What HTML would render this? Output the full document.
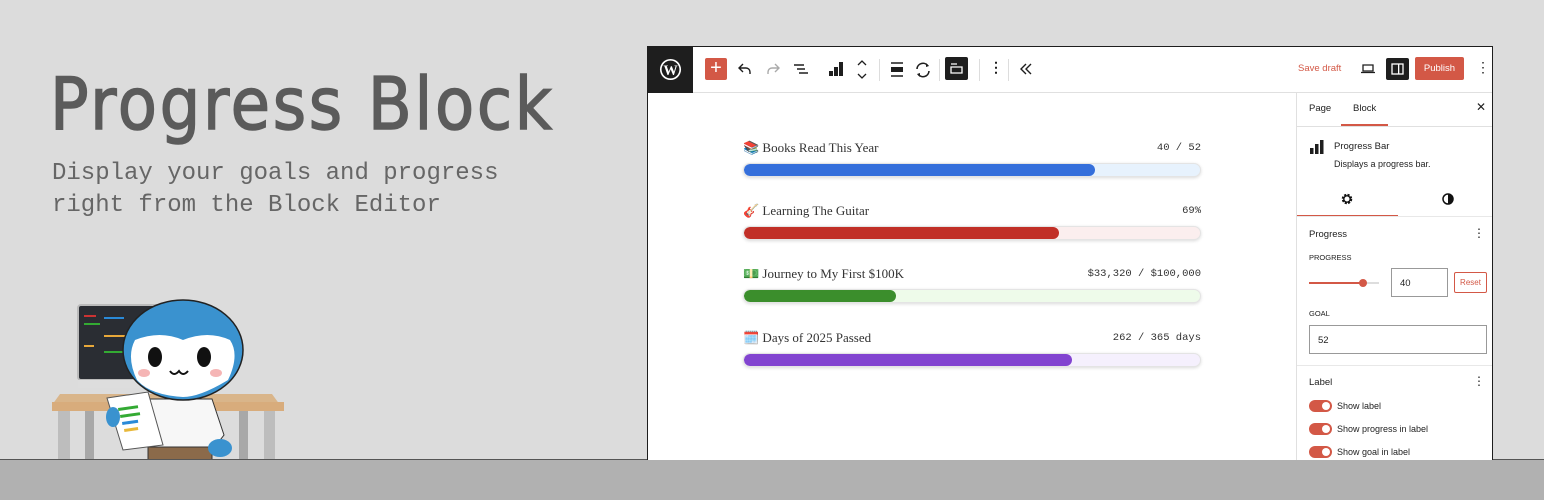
<!DOCTYPE html>
<html><head><meta charset="utf-8"><style>
*{box-sizing:border-box;margin:0;padding:0}
body{width:1544px;height:500px;background:#dcdcdc;position:relative;overflow:hidden;font-family:"Liberation Sans",sans-serif}
.ground{position:absolute;left:0;top:459px;width:1544px;height:41px;background:#b1b1b1;border-top:1px solid #555}
h1{position:absolute;left:50px;top:62px;font-size:72px;font-weight:400;color:#5b5b5b;letter-spacing:3px;font-family:"DejaVu Sans","Liberation Sans",sans-serif;transform:scaleX(0.89);transform-origin:left;-webkit-text-stroke:1.5px #5b5b5b;white-space:nowrap}
.sub{position:absolute;left:52px;top:158px;font-family:"Liberation Mono",monospace;font-size:24px;line-height:32px;color:#666}
.ed{position:absolute;left:647px;top:46px;width:846px;height:414px;background:#fff;border:1px solid #1e1e1e;border-bottom:none;overflow:hidden}
.tb{position:absolute;left:0;top:0;width:100%;height:46px;border-bottom:1px solid #e0e0e0}
.wp{position:absolute;left:0;top:0;width:45px;height:46px;background:#1e1e1e}
.ic{position:absolute}
.side{position:absolute;left:648px;top:46px;width:197px;height:370px;border-left:1px solid #e0e0e0;font-size:9px;color:#1e1e1e}
.row{position:absolute;left:95px;width:458px}
.lab{font-family:"Liberation Serif",serif;font-size:13px;color:#333;position:absolute;left:0;top:0}
.val{font-family:"Liberation Mono",monospace;font-size:10.5px;color:#333;position:absolute;right:0;top:2px}
.bar{position:absolute;left:0;top:23px;width:458px;height:14px;border-radius:7px;box-shadow:0 1px 3px rgba(0,0,0,.15);border:1px solid #e4e4e4;overflow:hidden}
.bar i{display:block;height:100%;border-radius:7px}
.tg{position:absolute;left:12px;width:23px;height:12px;border-radius:6px;background:#d35846}
.tg:after{content:"";position:absolute;right:2px;top:2px;width:8px;height:8px;border-radius:50%;background:#fff}
.tl{position:absolute;left:40px;font-size:9px}
</style></head><body>
<h1>Progress Block</h1>
<div class="sub">Display your goals and progress<br>right from the Block Editor</div>

<svg style="position:absolute;left:40px;top:295px" width="260" height="205" viewBox="0 0 260 205">
<rect x="38" y="10" width="128" height="75" rx="3" fill="#2a2d33" stroke="#bbb" stroke-width="2"/>
<rect x="44" y="20" width="12" height="2" fill="#c33"/><rect x="44" y="28" width="16" height="2" fill="#3a3"/><rect x="64" y="22" width="20" height="2" fill="#2a8ad8"/><rect x="64" y="40" width="24" height="2" fill="#e8a83a"/><rect x="64" y="56" width="22" height="2" fill="#3a3"/><rect x="44" y="50" width="10" height="2" fill="#e8a83a"/>
<rect x="38" y="85" width="128" height="8" fill="#ddd"/>
<polygon points="12,110 240,110 232,99 20,99" fill="#d9b58a"/>
<rect x="12" y="107" width="232" height="9" fill="#d8ac7c"/>
<rect x="18" y="116" width="12" height="76" fill="#bdbdbd"/><rect x="45" y="116" width="9" height="60" fill="#a8a8a8"/>
<rect x="224" y="116" width="11" height="76" fill="#bdbdbd"/><rect x="199" y="116" width="9" height="58" fill="#a8a8a8"/>
<path d="M108 104 L172 104 L184 140 L170 158 L110 158Z" fill="#f7f7f7" stroke="#333"/>
<path d="M108 152 L172 152 L172 172 L108 172Z" fill="#8b6a4a" stroke="#333"/>
<ellipse cx="122" cy="181" rx="14" ry="6" fill="#3a92cf"/><ellipse cx="160" cy="181" rx="14" ry="6" fill="#3a92cf"/>
<ellipse cx="180" cy="153" rx="12" ry="9" fill="#3a92cf"/>
<ellipse cx="143" cy="55" rx="60" ry="50" fill="#3a92cf" stroke="#222" stroke-width="1.5"/>
<path d="M95 45 Q120 35 143 45 Q168 35 190 45 Q200 60 188 85 Q160 102 143 102 Q110 100 97 85 Q86 62 95 45Z" fill="#fff"/>
<ellipse cx="115" cy="62" rx="7" ry="10" fill="#111"/><ellipse cx="164" cy="62" rx="7" ry="10" fill="#111"/>
<ellipse cx="104" cy="78" rx="6" ry="4" fill="#f5b5b5"/><ellipse cx="176" cy="78" rx="6" ry="4" fill="#f5b5b5"/>
<path d="M130 76 q4 6 9 0 q4 6 9 0" fill="none" stroke="#111" stroke-width="2"/>
<polygon points="67,103 108,97 123,150 83,155" fill="#fff" stroke="#555"/>
<rect x="78" y="113" width="20" height="3" fill="#3a3" transform="rotate(-8 78 113)"/><rect x="80" y="120" width="20" height="3" fill="#3a3" transform="rotate(-8 80 120)"/><rect x="82" y="127" width="16" height="3" fill="#2a8ad8" transform="rotate(-8 82 127)"/><rect x="84" y="134" width="14" height="3" fill="#e8b83a" transform="rotate(-8 84 134)"/>
<ellipse cx="73" cy="122" rx="7" ry="10" fill="#3a92cf"/>
</svg>

<div class="ground"></div>

<div class="ed">
 <div class="tb">
  <div class="wp"><svg class="ic" style="left:11px;top:11px" width="23" height="23" viewBox="0 0 24 24"><circle cx="12" cy="12" r="11" fill="#fff"/><circle cx="12" cy="12" r="9.3" fill="#1e1e1e"/><text x="12" y="17.5" text-anchor="middle" font-family="Liberation Serif" font-size="15" font-weight="bold" fill="#fff">W</text></svg></div>
  <div class="ic" style="left:57px;top:11px;width:22px;height:22px;background:#d35846;border-radius:2px;color:#fff;font-size:20px;line-height:21px;text-align:center">+</div>
  <svg class="ic" style="left:90px;top:16px" width="14" height="12"><path d="M5 1L1 5l4 4M1 5h7a4 4 0 0 1 4 4v2" fill="none" stroke="#1e1e1e" stroke-width="1.4"/></svg>
  <svg class="ic" style="left:118px;top:16px" width="14" height="12"><path d="M9 1l4 4-4 4M13 5H6a4 4 0 0 0-4 4v2" fill="none" stroke="#aaa" stroke-width="1.4"/></svg>
  <svg class="ic" style="left:146px;top:17px" width="14" height="11"><path d="M0 1h10M3 5h8M5 9h9" stroke="#1e1e1e" stroke-width="1.5"/></svg>
  <svg class="ic" style="left:181px;top:14px" width="15" height="15"><rect x="0" y="10" width="4" height="5" fill="#1e1e1e"/><rect x="5" y="6" width="4" height="9" fill="#1e1e1e"/><rect x="10" y="1" width="4" height="14" fill="#1e1e1e"/></svg>
  <svg class="ic" style="left:209px;top:13px" width="10" height="20"><path d="M1 5l4-4 4 4M1 14l4 4 4-4" fill="none" stroke="#1e1e1e" stroke-width="1.3"/></svg>
  <div class="ic" style="left:231px;top:12px;width:1px;height:22px;background:#ddd"></div>
  <svg class="ic" style="left:243px;top:15px" width="12" height="15"><path d="M0 1h12M0 14h12" stroke="#1e1e1e" stroke-width="1.5"/><rect x="0" y="5" width="12" height="5" fill="#1e1e1e"/></svg>
  <svg class="ic" style="left:266px;top:14px" width="18" height="18" viewBox="0 0 18 18"><path d="M3 8a6 6 0 0 1 11-3M15 10a6 6 0 0 1-11 3" fill="none" stroke="#1e1e1e" stroke-width="1.6"/><path d="M12 2l3 3-3 1zM6 16l-3-3 3-1z" fill="#1e1e1e"/></svg>
  <div class="ic" style="left:291px;top:12px;width:1px;height:22px;background:#ddd"></div>
  <div class="ic" style="left:297px;top:10px;width:23px;height:23px;background:#1e1e1e;border-radius:2px"><svg style="position:absolute;left:5px;top:6px" width="13" height="11"><path d="M1 1h6M1 4h11v6H1z" fill="none" stroke="#fff" stroke-width="1.3"/></svg></div>
  <div class="ic" style="left:331px;top:12px;width:1px;height:22px;background:#ddd"></div>
  <div class="ic" style="left:341px;top:12px;font-size:14px;font-weight:bold;color:#1e1e1e">⋮</div>
  <div class="ic" style="left:360px;top:12px;width:1px;height:22px;background:#ddd"></div>
  <svg class="ic" style="left:372px;top:16px" width="12" height="12"><path d="M6 1L1 6l5 5M11 1L6 6l5 5" fill="none" stroke="#1e1e1e" stroke-width="1.4"/></svg>
  <div class="ic" style="left:650px;top:16px;font-size:9.5px;color:#d35846">Save draft</div>
  <svg class="ic" style="left:713px;top:17px" width="14" height="10"><path d="M2 1h10v6H2zM0 8.5h14" fill="none" stroke="#1e1e1e" stroke-width="1.3"/></svg>
  <div class="ic" style="left:738px;top:11px;width:23px;height:22px;background:#1e1e1e;border-radius:2px"><svg style="position:absolute;left:5px;top:5px" width="13" height="12"><rect x="1" y="1" width="11" height="10" fill="none" stroke="#fff" stroke-width="1.3"/><rect x="7" y="1" width="1.3" height="10" fill="#fff"/></svg></div>
  <div class="ic" style="left:767px;top:10px;width:49px;height:23px;background:#d35846;border-radius:2px;color:#fff;font-size:9.5px;text-align:center;line-height:23px">Publish</div>
  <div class="ic" style="left:828px;top:12px;font-size:14px;color:#1e1e1e">⋮</div>
 </div>

 <div class="row" style="top:93px"><span class="lab">📚 Books Read This Year</span><span class="val">40 / 52</span><div class="bar" style="background:#e7f2fd"><i style="width:77%;background:#356fdb"></i></div></div>
 <div class="row" style="top:156px"><span class="lab">🎸 Learning The Guitar</span><span class="val">69%</span><div class="bar" style="background:#fbeeee"><i style="width:69%;background:#c12f27"></i></div></div>
 <div class="row" style="top:219px"><span class="lab">💵 Journey to My First $100K</span><span class="val">$33,320 / $100,000</span><div class="bar" style="background:#eefbea"><i style="width:33.3%;background:#3b8e2c"></i></div></div>
 <div class="row" style="top:283px"><span class="lab">🗓️ Days of 2025 Passed</span><span class="val">262 / 365 days</span><div class="bar" style="background:#f5f0fd"><i style="width:72%;background:#8244d0"></i></div></div>

 <div class="side">
  <div style="position:absolute;left:12px;top:10px;font-size:9.5px">Page</div>
  <div style="position:absolute;left:56px;top:10px;font-size:9.5px">Block</div>
  <div style="position:absolute;left:44px;top:31px;width:47px;height:1.5px;background:#d35846"></div>
  <div style="position:absolute;left:179px;top:7px;font-size:12px">✕</div>
  <div style="position:absolute;left:0;top:33px;width:100%;height:1px;background:#e0e0e0"></div>
  <svg style="position:absolute;left:13px;top:47px" width="14" height="14"><rect x="0" y="8" width="3.5" height="6" fill="#1e1e1e"/><rect x="5" y="4" width="3.5" height="10" fill="#1e1e1e"/><rect x="10" y="0" width="3.5" height="14" fill="#1e1e1e"/></svg>
  <div style="position:absolute;left:37px;top:48px;font-size:9.5px">Progress Bar</div>
  <div style="position:absolute;left:37px;top:66px;font-size:9px">Displays a progress bar.</div>
  <svg style="position:absolute;left:44px;top:100px" width="12" height="12" viewBox="0 0 12 12"><circle cx="6" cy="6" r="4" fill="none" stroke="#111" stroke-width="2.5" stroke-dasharray="2 1.2"/><circle cx="6" cy="6" r="3.2" fill="none" stroke="#111" stroke-width="1.4"/></svg>
  <svg style="position:absolute;left:145px;top:100px" width="12" height="12"><circle cx="6" cy="6" r="5" fill="none" stroke="#111" stroke-width="1.5"/><path d="M6 1a5 5 0 0 1 0 10z" fill="#111"/></svg>
  <div style="position:absolute;left:0;top:122px;width:101px;height:1.5px;background:#d35846"></div>
  <div style="position:absolute;left:0;top:123px;width:100%;height:1px;background:#e8e8e8"></div>
  <div style="position:absolute;left:12px;top:136px;font-size:9.5px">Progress</div>
  <div style="position:absolute;left:176px;top:133px;font-size:12px">⋮</div>
  <div style="position:absolute;left:12px;top:160px;font-size:7.5px">PROGRESS</div>
  <div style="position:absolute;left:12px;top:189px;width:70px;height:2px;background:#ddd"></div>
  <div style="position:absolute;left:12px;top:189px;width:55px;height:2px;background:#d35846"></div>
  <div style="position:absolute;left:62px;top:186px;width:8px;height:8px;border-radius:50%;background:#d35846"></div>
  <div style="position:absolute;left:94px;top:175px;width:57px;height:29px;border:1px solid #999;font-size:9.5px;padding:9px 0 0 8px">40</div>
  <div style="position:absolute;left:157px;top:179px;width:33px;height:21px;border:1px solid #d35846;border-radius:2px;color:#d35846;font-size:8px;text-align:center;line-height:19px">Reset</div>
  <div style="position:absolute;left:12px;top:216px;font-size:7.5px">GOAL</div>
  <div style="position:absolute;left:12px;top:232px;width:178px;height:29px;border:1px solid #999;font-size:9.5px;padding:9px 0 0 8px">52</div>
  <div style="position:absolute;left:0;top:272px;width:100%;height:1px;background:#e8e8e8"></div>
  <div style="position:absolute;left:12px;top:284px;font-size:9.5px">Label</div>
  <div style="position:absolute;left:176px;top:281px;font-size:12px">⋮</div>
  <div class="tg" style="top:307px"></div><div class="tl" style="top:308px">Show label</div>
  <div class="tg" style="top:330px"></div><div class="tl" style="top:331px">Show progress in label</div>
  <div class="tg" style="top:353px"></div><div class="tl" style="top:354px">Show goal in label</div>
 </div>
</div>
</body></html>
